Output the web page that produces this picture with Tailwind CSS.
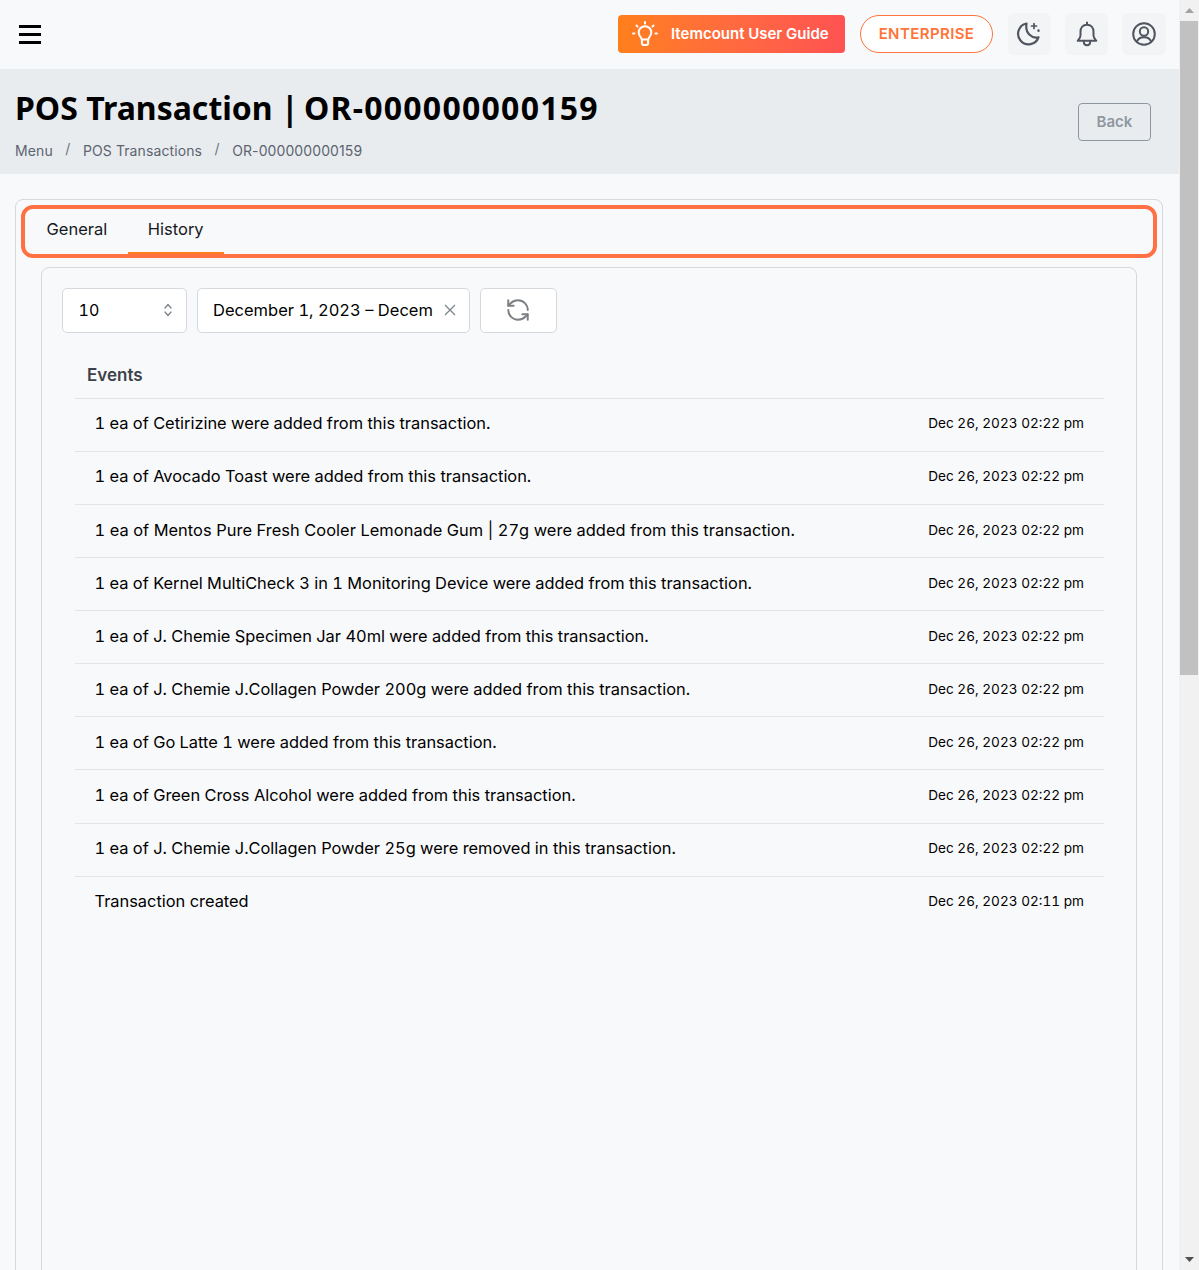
<!DOCTYPE html>
<html>
<head>
<meta charset="utf-8">
<script src="https://cdn.jsdelivr.net/npm/@tailwindcss/browser@4"></script>
</head>
<body class="m-0 h-[1270px] w-[1199px] overflow-hidden bg-[#f8f9fb] font-['Inter','Liberation_Sans',sans-serif] text-black">
<div class="flex h-[1270px]">
  <main class="flex h-[1270px] w-[1179px] flex-col overflow-hidden">
    <header class="flex h-[69px] shrink-0 items-center justify-between pr-[13px] pb-[2px] pl-[19px]">
      <button class="mt-[1px] flex h-[19px] w-[22px] flex-col justify-between">
        <span class="h-[3px] w-full bg-black"></span><span class="h-[3px] w-full bg-black"></span><span class="h-[3px] w-full bg-black"></span>
      </button>
      <div class="flex items-center">
        <a class="flex h-[38px] w-[227px] items-center rounded-[4px] bg-gradient-to-r from-[#ff7f1a] to-[#ff5252] pl-[13px] text-[15px] font-semibold whitespace-nowrap text-white">
          <svg class="h-[28px] w-[28px] shrink-0" viewBox="0 0 28 28" fill="none" stroke="#fff" stroke-width="2" stroke-linecap="round" stroke-linejoin="round"><path d="M14 2v1.500M5.500 5.500l1 1M22.500 5.500l-1 1M2 13.500h1.500M24.500 13.500H26"/><path d="M10.700 19.500c0-2-3-3.500-3-7a6.300 6.300 0 0 1 12.600 0c0 3.500-3 5-3 7z"/><path d="M10.900 19.500v3.500a2 2 0 0 0 2 2h2.200a2 2 0 0 0 2-2v-3.500"/></svg>
          <span class="ml-[12px] pt-[2px]">Itemcount User Guide</span>
        </a>
        <a class="ml-[15px] flex h-[38px] w-[133px] items-center justify-center rounded-full border border-[#ff7438] bg-white pt-[2px] text-[15px] font-semibold tracking-[0.4px] text-[#ff7438]">ENTERPRISE</a>
        <button class="ml-[15px] flex h-[42px] w-[43px] items-center justify-center rounded-[6px] bg-[#f3f4f6]">
          <svg class="-ml-[3px] h-[26px] w-[26px]" viewBox="0 0 26 26" fill="none" stroke="#50555f" stroke-width="2.200" stroke-linecap="round" stroke-linejoin="round"><path d="M11.500 2.500a10.500 10.500 0 1 0 12 13.800c-6 1.800-13.700-3.800-12-13.800z"/><path d="M19 2.500v5M16.500 5h5" stroke-width="1.700"/><path d="M23.500 9.500v.2" stroke-width="2.400"/></svg>
        </button>
        <button class="ml-[14px] flex h-[42px] w-[43px] items-center justify-center rounded-[6px] bg-[#f3f4f6]">
          <svg class="h-[26px] w-[26px]" viewBox="0 0 26 26" fill="none" stroke="#50555f" stroke-width="2" stroke-linecap="round" stroke-linejoin="round"><path d="M13 1.500v2.200M13 3.700c-4 0-6.500 3-6.500 7v3.800c0 2-1.500 3.600-2.800 5.300h18.600c-1.300-1.700-2.800-3.300-2.800-5.300v-3.800c0-4-2.500-7-6.500-7z"/><path d="M9.800 20.500c0 2.800 1.300 3.800 3.200 3.800s3.200-1 3.200-3.800"/></svg>
        </button>
        <button class="ml-[14px] flex h-[42px] w-[44px] items-center justify-center rounded-[6px] bg-[#f3f4f6]">
          <svg class="h-[26px] w-[26px]" viewBox="0 0 26 26" fill="none" stroke="#50555f" stroke-width="2" stroke-linecap="round" stroke-linejoin="round"><circle cx="13" cy="13" r="10.800"/><circle cx="13" cy="10.500" r="4.200"/><path d="M5.800 20.800c1-3 3.800-4.600 7.200-4.600s6.200 1.600 7.200 4.600"/></svg>
        </button>
      </div>
    </header>

    <section class="flex h-[105px] shrink-0 items-start justify-between bg-[#e9ecef] pr-[28px] pl-[15px]">
      <div>
        <h1 class="mt-[16px] h-[46px] font-['Noto_Sans','Open_Sans',sans-serif] text-[32px] leading-[46px] font-bold whitespace-nowrap text-black">POS Transaction | <span class="-ml-[3px] tracking-[1.250px]">OR-000000000159</span></h1>
        <nav class="mt-[8px] flex h-[24px] items-center text-[14px] leading-[24px] tracking-[0.1px] text-[#5c6470]">
          <span>Menu</span><span class="mx-[12.500px] -translate-y-[2px] text-[#6c757d]">/</span><span>POS Transactions</span><span class="mx-[12.500px] -translate-y-[2px] text-[#6c757d]">/</span><span>OR-000000000159</span>
        </nav>
      </div>
      <button class="mt-[34px] h-[38px] w-[73px] rounded-[4px] border border-[#8f97a1] pt-[1px] text-[15px] font-semibold text-[#8f97a1]">Back</button>
    </section>

    <section class="mt-[25px] ml-[15px] h-[1200px] w-[1148px] shrink-0 rounded-t-[8px] border border-[#d5d8dd] px-[5px] pt-[5px] tabular-nums">
      <div class="flex h-[53px] w-[1136px] items-end rounded-[12px] border-[4px] border-[#ff7043] pl-[1px]">
        <a class="flex h-[45px] items-center px-[20.500px] pb-[5px] text-[16.500px] leading-none text-[#16181d]">General</a>
        <a class="flex h-[45px] items-center border-b-[2.500px] border-[#ff7d1a] px-[20px] pb-[3px] text-[16.500px] leading-none text-[#16181d]">History</a>
      </div>
      <div class="mt-[9px] ml-[20px] h-[1100px] w-[1096px] rounded-t-[8px] border border-[#d5d8dd] pt-[20px] pl-[20px]">
        <div class="flex gap-[10px]">
          <div class="flex h-[45px] w-[125px] items-center justify-between rounded-[5px] border border-[#d5d8dd] bg-white pr-[12px] pb-[1px] pl-[15.500px] text-[16px]">
            <span>10</span>
            <svg class="h-[16px] w-[12px]" viewBox="0 0 12 16" fill="none" stroke="#7c828a" stroke-width="1.200" stroke-linecap="round" stroke-linejoin="round"><path d="M3 6l3-3.500L9 6M3 10l3 3.500L9 10"/></svg>
          </div>
          <div class="flex h-[45px] w-[273px] items-center rounded-[5px] border border-[#d5d8dd] bg-white pb-[1px] pl-[15px] text-[16.500px]">
            <span class="w-[220px] overflow-hidden whitespace-nowrap">December 1, 2023 – Decem</span>
            <svg class="ml-[11px] h-[12px] w-[12px]" viewBox="0 0 12 12" fill="none" stroke="#7c828a" stroke-width="1.200"><path d="M1 1l10 10M11 1L1 11"/></svg>
          </div>
          <button class="flex h-[45px] w-[77px] items-center justify-center rounded-[5px] border border-[#d5d8dd] bg-white pr-[2px] pb-[2px]">
            <svg class="h-[26px] w-[26px]" viewBox="0 0 24 24" fill="none" stroke="#7c7f84" stroke-width="1.800" stroke-linecap="round" stroke-linejoin="round"><path d="M21 12a9 9 0 0 0-9-9 9.750 9.750 0 0 0-6.740 2.740L3 8"/><path d="M3 3v5h5"/><path d="M3 12a9 9 0 0 0 9 9 9.750 9.750 0 0 0 6.740-2.740L21 16"/><path d="M16 16h5v5"/></svg>
          </button>
        </div>
        <div class="mt-[20px] ml-[13px] w-[1029px]">
          <div class="flex h-[44.500px] items-center pl-[12px] text-[17px] font-semibold text-[#3d424a]">Events</div>
          <ul class="text-[16.400px]">
            <li class="flex h-[53.125px] items-center justify-between border-t border-[#e3e5e8] pr-[20px] pb-[2px] pl-[19.500px]"><span>1 ea of Cetirizine were added from this transaction.</span><span class="text-[13.600px]">Dec 26, 2023 02:22 pm</span></li>
            <li class="flex h-[53.125px] items-center justify-between border-t border-[#e3e5e8] pr-[20px] pb-[2px] pl-[19.500px]"><span>1 ea of Avocado Toast were added from this transaction.</span><span class="text-[13.600px]">Dec 26, 2023 02:22 pm</span></li>
            <li class="flex h-[53.125px] items-center justify-between border-t border-[#e3e5e8] pr-[20px] pb-[2px] pl-[19.500px]"><span class="tracking-[0.06px]">1 ea of Mentos Pure Fresh Cooler Lemonade Gum | 27g were added from this transaction.</span><span class="text-[13.600px]">Dec 26, 2023 02:22 pm</span></li>
            <li class="flex h-[53.125px] items-center justify-between border-t border-[#e3e5e8] pr-[20px] pb-[2px] pl-[19.500px]"><span>1 ea of Kernel MultiCheck 3 in 1 Monitoring Device were added from this transaction.</span><span class="text-[13.600px]">Dec 26, 2023 02:22 pm</span></li>
            <li class="flex h-[53.125px] items-center justify-between border-t border-[#e3e5e8] pr-[20px] pb-[2px] pl-[19.500px]"><span>1 ea of J. Chemie Specimen Jar 40ml were added from this transaction.</span><span class="text-[13.600px]">Dec 26, 2023 02:22 pm</span></li>
            <li class="flex h-[53.125px] items-center justify-between border-t border-[#e3e5e8] pr-[20px] pb-[2px] pl-[19.500px]"><span>1 ea of J. Chemie J.Collagen Powder 200g were added from this transaction.</span><span class="text-[13.600px]">Dec 26, 2023 02:22 pm</span></li>
            <li class="flex h-[53.125px] items-center justify-between border-t border-[#e3e5e8] pr-[20px] pb-[2px] pl-[19.500px]"><span>1 ea of Go Latte 1 were added from this transaction.</span><span class="text-[13.600px]">Dec 26, 2023 02:22 pm</span></li>
            <li class="flex h-[53.125px] items-center justify-between border-t border-[#e3e5e8] pr-[20px] pb-[2px] pl-[19.500px]"><span>1 ea of Green Cross Alcohol were added from this transaction.</span><span class="text-[13.600px]">Dec 26, 2023 02:22 pm</span></li>
            <li class="flex h-[53.125px] items-center justify-between border-t border-[#e3e5e8] pr-[20px] pb-[2px] pl-[19.500px]"><span>1 ea of J. Chemie J.Collagen Powder 25g were removed in this transaction.</span><span class="text-[13.600px]">Dec 26, 2023 02:22 pm</span></li>
            <li class="flex h-[53.125px] items-center justify-between border-t border-[#e3e5e8] pr-[20px] pb-[2px] pl-[19.500px]"><span>Transaction created</span><span class="text-[13.600px]">Dec 26, 2023 02:11 pm</span></li>
          </ul>
        </div>
      </div>
    </section>
  </main>
  <aside class="flex h-[1270px] w-[20px] shrink-0 flex-col bg-[#f1f1f1]">
    <div class="flex h-[21px] items-center justify-center"><svg class="h-[5px] w-[9px]" viewBox="0 0 9 5"><path d="M4.500 0L9 5H0z" fill="#a3a3a3"/></svg></div>
    <div class="mx-auto h-[654px] w-[18px] bg-[#c1c1c1]"></div>
    <div class="mt-auto flex h-[21px] items-center justify-center"><svg class="h-[5px] w-[9px]" viewBox="0 0 9 5"><path d="M4.500 5L9 0H0z" fill="#505050"/></svg></div>
  </aside>
</div>
</body>
</html>
